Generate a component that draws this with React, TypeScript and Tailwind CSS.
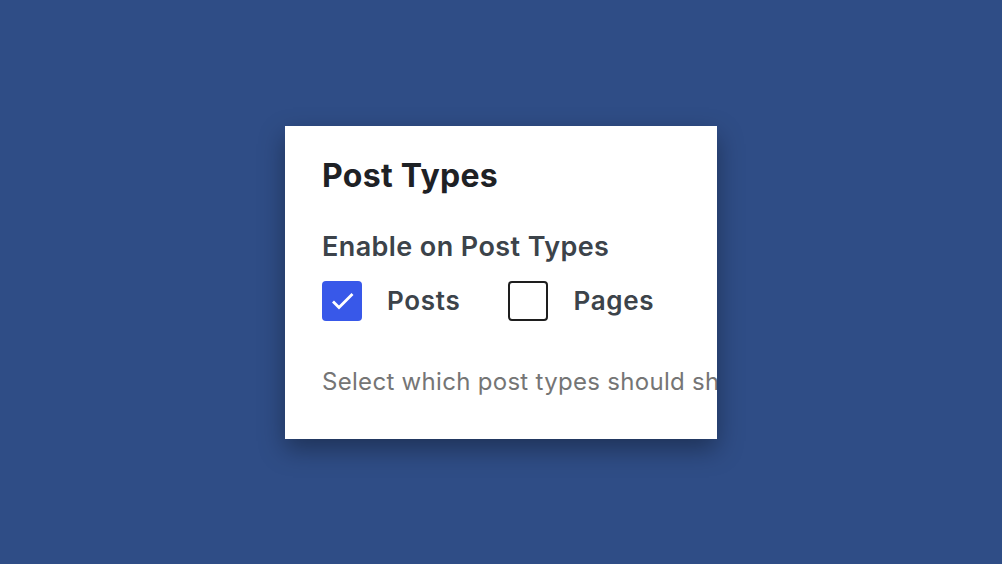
import React, { useState } from "react";

const font = { fontFamily: "Inter, 'Noto Sans', sans-serif" };

type BoxProps = {
  label: string;
  checked: boolean;
  onToggle: () => void;
};

const CheckboxItem = ({ label, checked, onToggle }: BoxProps) => (
  <label className="flex cursor-pointer items-center gap-[25px]" onClick={onToggle}>
    <span
      className={
        checked
          ? "flex h-[40px] w-[40px] items-center justify-center rounded-[4px] bg-[#3858e9]"
          : "flex h-[40px] w-[40px] items-center justify-center rounded-[4px] border-2 border-[#1e1e1e] bg-white"
      }
    >
      {checked && (
        <svg width="40" height="40" viewBox="0 0 40 40" fill="none">
          <path d="M11 20.5l6 6L30.5 13" stroke="white" strokeWidth="2.8" />
        </svg>
      )}
    </span>
    <span className="text-[26px] font-semibold leading-[40px] tracking-[0.7px] text-[#3c434a]">{label}</span>
  </label>
);

export default function App() {
  const [posts, setPosts] = useState(true);
  const [pages, setPages] = useState(false);

  return (
    <div className="flex h-[564px] w-full items-center justify-center bg-[#2f4d86]" style={font}>
      <div className="h-[313px] w-[432px] overflow-hidden bg-white pl-[37px] pt-[30px] shadow-[0_10px_24px_rgba(0,0,0,0.35)]">
        <h2 className="whitespace-nowrap text-[32px] font-bold leading-[40px] tracking-[0.3px] text-[#1e2125]">
          Post Types
        </h2>
        <h3 className="mt-[35px] whitespace-nowrap text-[27px] font-semibold leading-[32px] tracking-[0.4px] text-[#3c434a]">
          Enable on Post Types
        </h3>
        <div className="mt-[18px] flex gap-[48px]">
          <CheckboxItem label="Posts" checked={posts} onToggle={() => setPosts(!posts)} />
          <CheckboxItem label="Pages" checked={pages} onToggle={() => setPages(!pages)} />
        </div>
        <p className="mt-[46px] whitespace-nowrap text-[24px] leading-[30px] tracking-[0.3px] text-[#757575]">
          Select which post types should show this block
        </p>
      </div>
    </div>
  );
}
